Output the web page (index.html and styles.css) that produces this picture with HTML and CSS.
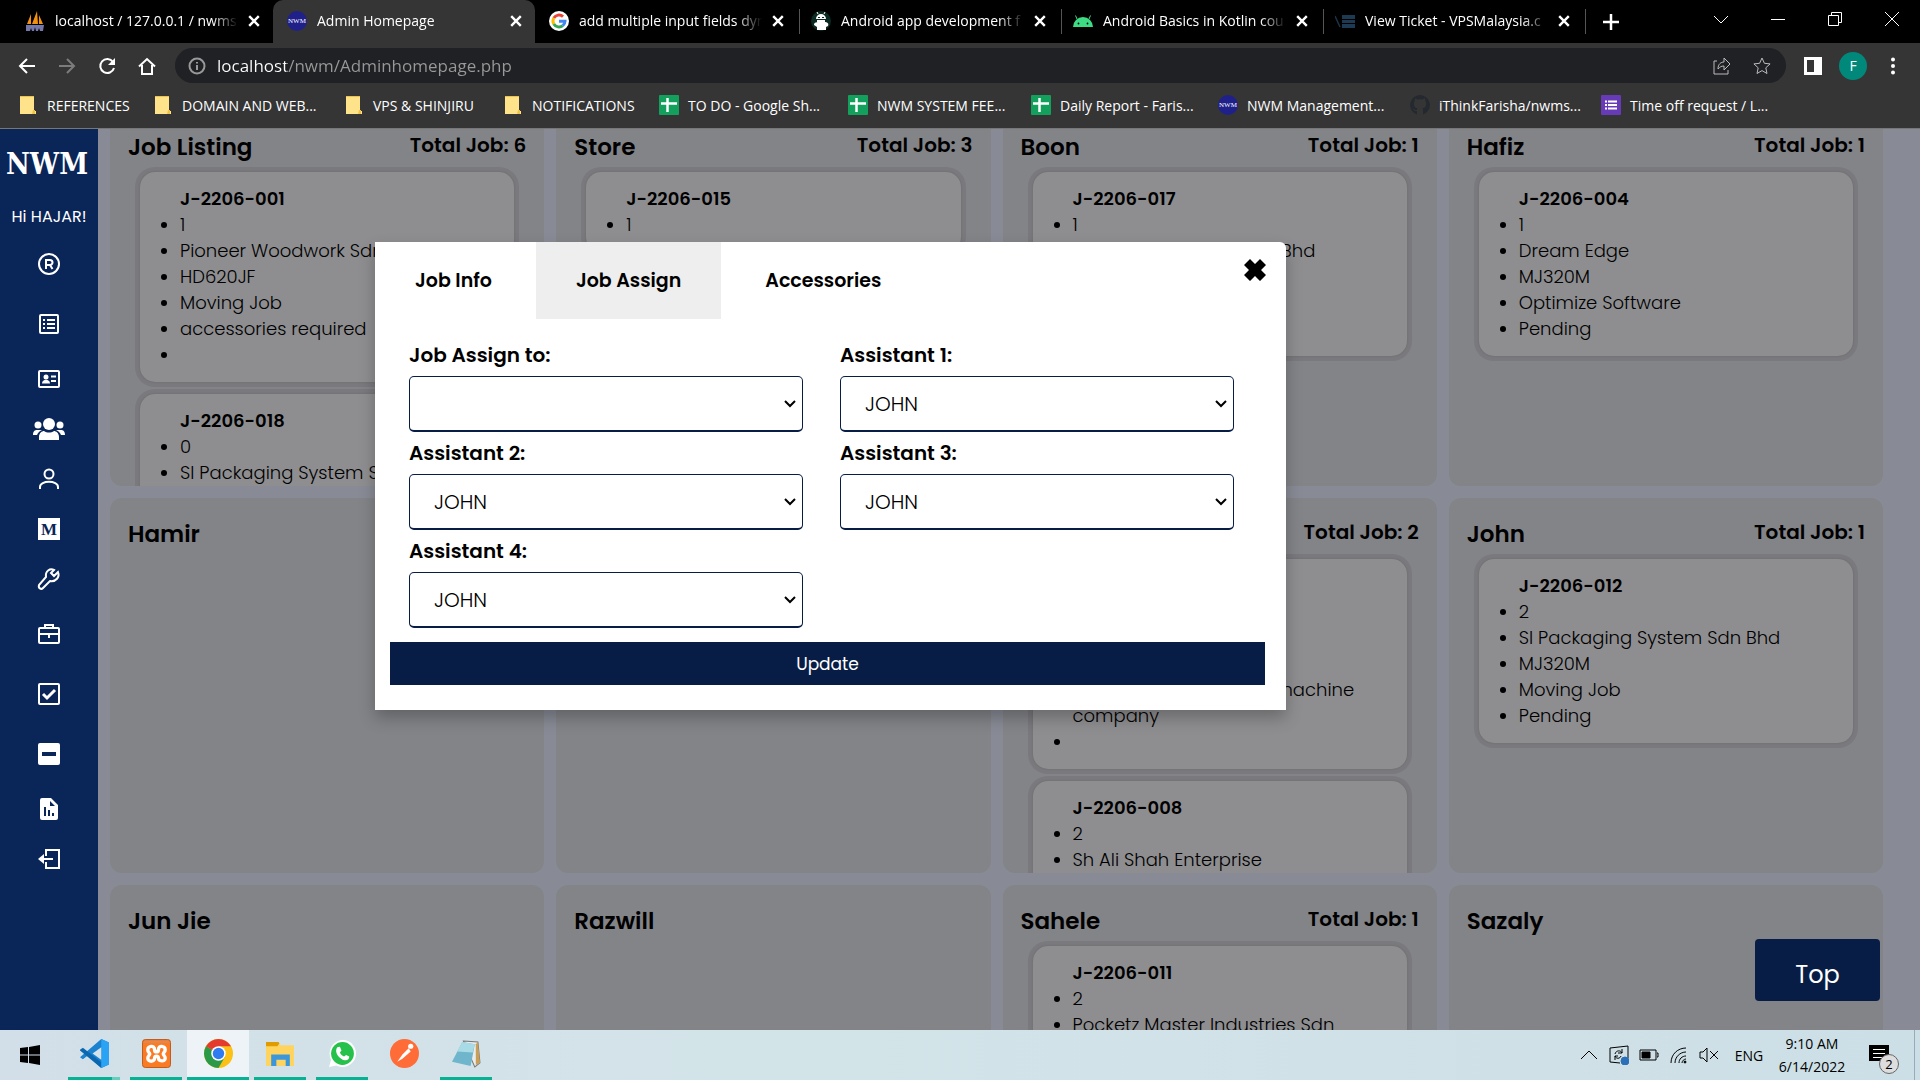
FILE: index.html
```html
<!DOCTYPE html>
<html lang="en">
<head>
<meta charset="utf-8">
<title>Admin Homepage</title>
<link rel="stylesheet" href="styles.css">
</head>
<body>
<header class="browser">
  <div class="tabstrip">
    <div class="tab">
      <svg class="fav" viewBox="0 0 20 20"><path d="M2 13 6 3v10zM7 13 12 0l1 13zM14 13l0-9 4 9z" fill="#f29111"/><path d="M1 14h18l-1 6h-3l-1-3-1 3h-2l-1-4-1 4H7l-1-3-1 3H1z" fill="#7477a8"/></svg>
      <span class="tab-title">localhost / 127.0.0.1 / nwms</span>
      <button class="tab-close" aria-label="Close tab"><svg viewBox="0 0 10 10"><path d="M1 1l8 8M9 1 1 9"/></svg></button>
    </div>
    <div class="tab active">
      <svg class="fav" viewBox="0 0 20 20"><circle cx="10" cy="10" r="10" fill="#20208a"/><text x="10" y="12" text-anchor="middle" class="nwm-mark">NWM</text></svg>
      <span class="tab-title">Admin Homepage</span>
      <button class="tab-close" aria-label="Close tab"><svg viewBox="0 0 10 10"><path d="M1 1l8 8M9 1 1 9"/></svg></button>
    </div>
    <div class="tab no-line">
      <svg class="fav" viewBox="0 0 20 20"><circle cx="10" cy="10" r="10" fill="#fff"/><g fill="none" stroke-width="3"><path d="M14 5.6A6 6 0 0 0 4.8 7" stroke="#ea4335"/><path d="M4.8 7a6 6 0 0 0 0 6" stroke="#fbbc05"/><path d="M4.8 13a6 6 0 0 0 9 1.6" stroke="#34a853"/><path d="M13.8 14.6A6 6 0 0 0 16 10.2h-6" stroke="#4285f4"/></g></svg>
      <span class="tab-title">add multiple input fields dyn</span>
      <button class="tab-close" aria-label="Close tab"><svg viewBox="0 0 10 10"><path d="M1 1l8 8M9 1 1 9"/></svg></button>
    </div>
    <div class="tab">
      <svg class="fav" viewBox="0 0 20 20"><circle cx="10" cy="10" r="10" fill="#0b2a22"/><path d="M5 8a5 5 0 0 1 10 0zM3 14c0-3 3-3 6-3h4c4 0 5 2 4 4l-2 1v3H6v-3z" fill="#fff"/><path d="M7 3 6 1M13 3l1-2" stroke="#fff"/><path d="M6 9h8v2H6z" fill="#fff"/><path d="M7 6h2v1H7zM11 6h2v1h-2z" fill="#0b2a22"/></svg>
      <span class="tab-title">Android app development f</span>
      <button class="tab-close" aria-label="Close tab"><svg viewBox="0 0 10 10"><path d="M1 1l8 8M9 1 1 9"/></svg></button>
    </div>
    <div class="tab">
      <svg class="fav" viewBox="0 0 20 20"><path d="M0 16a10 10 0 0 1 20 0z" fill="#3ddc84"/><path d="M4 8 2.500 4.500M16 8l1.500-3.500" stroke="#3ddc84"/><circle cx="5.500" cy="12.500" r=".9"/><circle cx="14.500" cy="12.500" r=".9"/></svg>
      <span class="tab-title">Android Basics in Kotlin cou</span>
      <button class="tab-close" aria-label="Close tab"><svg viewBox="0 0 10 10"><path d="M1 1l8 8M9 1 1 9"/></svg></button>
    </div>
    <div class="tab">
      <svg class="fav" viewBox="0 0 20 20"><path d="M0 5l5 11" stroke="#1d3344" stroke-width="1.500"/><path d="M7 4h13v4H7zM7 9h13v3H7zM7 13h13v4H7z" fill="#1d3a52"/></svg>
      <span class="tab-title">View Ticket - VPSMalaysia.c</span>
      <button class="tab-close" aria-label="Close tab"><svg viewBox="0 0 10 10"><path d="M1 1l8 8M9 1 1 9"/></svg></button>
    </div>
    <button class="new-tab" aria-label="New tab"><svg viewBox="0 0 16 16"><path d="M8 0v16M0 8h16" stroke="#fff" stroke-width="2.500"/></svg></button>
    <div class="window-controls">
      <button aria-label="Search tabs"><svg viewBox="0 0 14 14"><path d="M0 4l7 7 7-7"/></svg></button>
      <button aria-label="Minimize"><svg viewBox="0 0 14 14"><path d="M0 7.500h14"/></svg></button>
      <button aria-label="Restore"><svg viewBox="0 0 14 14"><path d="M.5 3.500h10v10H.5zM3.500 3V.5h10v10H11"/></svg></button>
      <button aria-label="Close window"><svg viewBox="0 0 14 14"><path d="M0 0l14 14M14 0 0 14"/></svg></button>
    </div>
  </div>

  <div class="toolbar">
    <button class="nav" aria-label="Back"><svg viewBox="0 0 18 18"><path d="M17 9H2M9 2 2 9l7 7"/></svg></button>
    <button class="nav off" aria-label="Forward"><svg viewBox="0 0 18 18"><path d="M1 9h15M9 2l7 7-7 7"/></svg></button>
    <button class="nav" aria-label="Reload"><svg viewBox="0 0 18 18"><path d="M15 5a7 7 0 1 0 1 6"/><path d="M17 1v7h-7z" class="solid"/></svg></button>
    <button class="nav" aria-label="Home"><svg viewBox="0 0 18 18"><path d="M1 9.500 9 2l8 7.500M4 8v9h10V8"/></svg></button>
    <div class="omnibox">
      <svg class="info" viewBox="0 0 18 18"><circle cx="9" cy="9" r="7.500"/><path d="M9 8v5M9 5v1.500"/></svg>
      <input class="url" type="text" value="localhost/nwm/Adminhomepage.php" aria-label="Address">
      <button aria-label="Share"><svg viewBox="0 0 20 20"><path d="M5 5H2v13h14v-4M6 13c0-5 3-7 6-7V2l6 6-6 6v-4c-3 0-4 1-6 3z"/></svg></button>
      <button aria-label="Bookmark"><svg viewBox="0 0 20 20"><path d="M10 2l2.400 5.300 5.700.6-4.300 3.900 1.200 5.700-5-2.900-5 2.900 1.200-5.700L1.900 7.900l5.700-.6z"/></svg></button>
    </div>
    <button class="tool" aria-label="Side panel"><svg viewBox="0 0 18 18"><path d="M0 0h18v18H0zM3 3v12h7V3z" fill="#fff" fill-rule="evenodd"/></svg></button>
    <button class="tool avatar">F</button>
    <button class="tool" aria-label="Menu"><svg viewBox="0 0 18 18" fill="#fff"><circle cx="9" cy="2.500" r="2"/><circle cx="9" cy="9" r="2"/><circle cx="9" cy="15.500" r="2"/></svg></button>
  </div>

  <nav class="bookmarks">
    <a href="#"><svg viewBox="0 0 20 20"><path d="M0 1h14v15h2v3H0z" fill="#ffe38b"/><path d="M0 1h14v1H0zM13 15h2v4h-3z" fill="#f0c24a"/></svg>REFERENCES</a>
    <a href="#"><svg viewBox="0 0 20 20"><path d="M0 1h14v15h2v3H0z" fill="#ffe38b"/><path d="M0 1h14v1H0zM13 15h2v4h-3z" fill="#f0c24a"/></svg>DOMAIN AND WEB...</a>
    <a href="#"><svg viewBox="0 0 20 20"><path d="M0 1h14v15h2v3H0z" fill="#ffe38b"/><path d="M0 1h14v1H0zM13 15h2v4h-3z" fill="#f0c24a"/></svg>VPS &amp; SHINJIRU</a>
    <a href="#"><svg viewBox="0 0 20 20"><path d="M0 1h14v15h2v3H0z" fill="#ffe38b"/><path d="M0 1h14v1H0zM13 15h2v4h-3z" fill="#f0c24a"/></svg>NOTIFICATIONS</a>
    <a href="#" class="site"><svg viewBox="0 0 20 20"><rect width="20" height="20" rx="1" fill="#12a05c"/><path d="M8.500 3v14M2 8.500h16" stroke="#fff" stroke-width="2.500"/></svg>TO DO - Google Sh...</a>
    <a href="#" class="site"><svg viewBox="0 0 20 20"><rect width="20" height="20" rx="1" fill="#12a05c"/><path d="M8.500 3v14M2 8.500h16" stroke="#fff" stroke-width="2.500"/></svg>NWM SYSTEM FEE...</a>
    <a href="#" class="site"><svg viewBox="0 0 20 20"><rect width="20" height="20" rx="1" fill="#12a05c"/><path d="M8.500 3v14M2 8.500h16" stroke="#fff" stroke-width="2.500"/></svg>Daily Report - Faris...</a>
    <a href="#" class="site"><svg viewBox="0 0 20 20"><circle cx="10" cy="10" r="10" fill="#20208a"/><text x="10" y="12" text-anchor="middle" class="nwm-mark">NWM</text></svg>NWM Management...</a>
    <a href="#" class="site"><svg viewBox="0 0 20 20"><path d="M10 0a10 10 0 0 0-3 19.500V16c-3 .6-3.500-1.500-4.500-2 2-.4 2 1.500 4.500 1 0-1 .3-1.400.8-1.700C5 13 3.800 11.500 3.800 8.700c0-1 .4-2 1-2.600-.2-.8-.1-1.800.2-2.500 1 0 1.900.5 2.500 1a9 9 0 0 1 5 0c.6-.5 1.500-1 2.500-1 .3.700.4 1.700.2 2.500.6.600 1 1.600 1 2.600 0 2.800-1.200 4.300-4 4.600.5.300.8 1 .8 2v4.200A10 10 0 0 0 10 0z" fill="#24292f"/></svg>iThinkFarisha/nwms...</a>
    <a href="#" class="site"><svg viewBox="0 0 20 20"><rect width="20" height="20" rx="1" fill="#673ab7"/><path d="M4 6.500h2M7 6.500h9M4 10h2M7 10h9M4 13.500h2M7 13.500h9" stroke="#fff" stroke-width="2"/></svg>Time off request / L...</a>
  </nav>
</header>

<div class="app">
  <aside class="sidebar">
    <div class="logo">NWM</div>
    <div class="greeting">Hi HAJAR!</div>
    <nav class="menu">
      <a href="#" class="tall" aria-label="Register"><svg viewBox="0 0 24 24"><circle cx="12" cy="12" r="10" class="line"/><path d="M9 17V8h4a2.500 2.500 0 0 1 0 5H9m4 0 2.500 4" class="line"/></svg></a>
      <a href="#" class="tall" aria-label="Job list"><svg viewBox="0 0 24 24"><rect x="3" y="3" width="18" height="18" rx="1" class="line"/><path d="M6 8h2M10 8h8M6 12h2M10 12h8M6 16h2M10 16h8" class="line"/></svg></a>
      <a href="#" aria-label="Contacts"><svg viewBox="0 0 24 24"><rect x="2" y="4" width="20" height="16" rx="1" class="line"/><circle cx="9" cy="10" r="2.500"/><path d="M5 16.500c0-5 8-5 8 0zM14 8.500h5v2h-5zM14 13h5v2h-5z"/></svg></a>
      <a href="#" class="wide" aria-label="Staff"><svg viewBox="0 0 32 24"><path d="M6 23v-3c0-4 3-6 5-6 3 2 7 2 10 0 2 0 5 2 5 6v3zM0 18c0-4 2-5 4-5h5c-3 1-4 3-5 5zM32 18c0-4-2-5-4-5h-5c3 1 4 3 5 5z"/><circle cx="16" cy="7" r="6"/><circle cx="5" cy="8" r="3.500"/><circle cx="27" cy="8" r="3.500"/></svg></a>
      <a href="#" aria-label="Profile"><svg viewBox="0 0 24 24"><circle cx="12" cy="7" r="4.500" class="line"/><path d="M3 22v-2c0-7 18-7 18 0v2" class="line"/></svg></a>
      <a href="#" aria-label="Machines"><svg viewBox="0 0 24 24"><path d="M1 1h22v22H1z"/><text x="12" y="18" text-anchor="middle" class="m-mark">M</text></svg></a>
      <a href="#" aria-label="Maintenance"><svg viewBox="0 0 24 24"><path d="M17 3c-4-2-9 1-8 7l-7 8c-1 3 2 5 4 3l7-7c6 1 10-4 8-9l-4 4-3-3z" class="line"/></svg></a>
      <a href="#" class="tall" aria-label="Work"><svg viewBox="0 0 24 24"><rect x="2" y="6" width="20" height="15" rx="1" class="line"/><path d="M8 6V3h8v3M2 12h20M12 11v5" class="line"/></svg></a>
      <a href="#" class="tall" aria-label="Completed"><svg viewBox="0 0 24 24"><rect x="2" y="2" width="20" height="20" rx="1" class="line"/><path d="M6 12l4 4 8-8" class="line bold"/></svg></a>
      <a href="#" class="tall" aria-label="Incomplete"><svg viewBox="0 0 24 24"><path d="M3 1h18q2 0 2 2v18q0 2-2 2H3q-2 0-2-2V3q0-2 2-2zM5 10v4h14v-4z" fill-rule="evenodd"/></svg></a>
      <a href="#" aria-label="Report"><svg viewBox="0 0 24 24"><path d="M5 1h9l7 7v13q0 2-2 2H5q-2 0-2-2V3q0-2 2-2zM7 10v9h2v-9zM11 13v6h2v-6zM15 16v3h2v-3zM13 4v5h5z" fill-rule="evenodd"/></svg></a>
      <a href="#" aria-label="Log out"><svg viewBox="0 0 24 24"><path d="M9 9V3h13v18H9v-6M6 12h10" class="line"/><path d="M1 12l6-5v10z"/></svg></a>
    </nav>
  </aside>

  <main class="content">
    <div class="board">
      <section class="column">
        <div class="head"><h2>Job Listing</h2><span>Total Job: 6</span></div>
        <div class="card"><ul><li class="code">J-2206-001</li><li>1</li><li>Pioneer Woodwork Sdn Bhd</li><li>HD620JF</li><li>Moving Job</li><li>accessories required</li><li></li></ul></div>
        <div class="card"><ul><li class="code">J-2206-018</li><li>0</li><li>Sl Packaging System Sdn Bhd</li></ul></div>
      </section>
      <section class="column">
        <div class="head"><h2>Store</h2><span>Total Job: 3</span></div>
        <div class="card"><ul><li class="code">J-2206-015</li><li>1</li></ul></div>
      </section>
      <section class="column">
        <div class="head"><h2>Boon</h2><span>Total Job: 1</span></div>
        <div class="card"><ul><li class="code">J-2206-017</li><li>1</li><li>Pioneer Woodwork Sdn Bhd</li><li></li><li></li><li></li></ul></div>
      </section>
      <section class="column">
        <div class="head"><h2>Hafiz</h2><span>Total Job: 1</span></div>
        <div class="card"><ul><li class="code">J-2206-004</li><li>1</li><li>Dream Edge</li><li>MJ320M</li><li>Optimize Software</li><li>Pending</li></ul></div>
      </section>

      <section class="column">
        <div class="head"><h2>Hamir</h2></div>
      </section>
      <section class="column"></section>
      <section class="column">
        <div class="head"><h2></h2><span>Total Job: 2</span></div>
        <div class="card"><ul><li class="code"></li><li></li><li></li><li></li><li>Moving the jobs to the machine company</li><li></li></ul></div>
        <div class="card"><ul><li class="code">J-2206-008</li><li>2</li><li>Sh Ali Shah Enterprise</li><li></li></ul></div>
      </section>
      <section class="column">
        <div class="head"><h2>John</h2><span>Total Job: 1</span></div>
        <div class="card"><ul><li class="code">J-2206-012</li><li>2</li><li>Sl Packaging System Sdn Bhd</li><li>MJ320M</li><li>Moving Job</li><li>Pending</li></ul></div>
      </section>

      <section class="column">
        <div class="head"><h2>Jun Jie</h2></div>
      </section>
      <section class="column">
        <div class="head"><h2>Razwill</h2></div>
      </section>
      <section class="column">
        <div class="head"><h2>Sahele</h2><span>Total Job: 1</span></div>
        <div class="card"><ul><li class="code">J-2206-011</li><li>2</li><li>Pocketz Master Industries Sdn Bhd</li></ul></div>
      </section>
      <section class="column">
        <div class="head"><h2>Sazaly</h2></div>
      </section>
    </div>
  </main>

  <button class="to-top">Top</button>

  <div class="overlay">
    <div class="modal" role="dialog" aria-label="Job Assign">
      <div class="modal-tabs">
        <button>Job Info</button>
        <button class="current">Job Assign</button>
        <button>Accessories</button>
      </div>
      <button class="modal-close" aria-label="Close"><svg viewBox="0 0 22 22"><path d="M6 0l5 5 5-5 6 6-5 5 5 5-6 6-5-5-5 5-6-6 5-5-5-5z"/></svg></button>
      <form>
        <div class="fields">
          <div class="field"><label for="assign">Job Assign to:</label><select id="assign"><option></option><option>JOHN</option></select></div>
          <div class="field"><label for="a1">Assistant 1:</label><select id="a1"><option>JOHN</option></select></div>
          <div class="field"><label for="a2">Assistant 2:</label><select id="a2"><option>JOHN</option></select></div>
          <div class="field"><label for="a3">Assistant 3:</label><select id="a3"><option>JOHN</option></select></div>
          <div class="field"><label for="a4">Assistant 4:</label><select id="a4"><option>JOHN</option></select></div>
        </div>
        <button class="update" type="button">Update</button>
      </form>
    </div>
  </div>
</div>

<footer class="taskbar">
  <button class="start" aria-label="Start"><svg viewBox="0 0 20 20"><path d="M0 3l8-1v7.500H0zM9 2l11-2v9.500H9zM0 10.500h8V18l-8-1zM9 10.500h11V20L9 18z"/></svg></button>
  <div class="apps">
    <button class="open more" aria-label="Visual Studio Code"><svg viewBox="0 0 30 30"><path d="M22 0l8 3.500v23L22 30 8 17l-5 4-3-2 22-19z" fill="#1a82cf"/><path d="M0 11l3-2 19 15v6L0 12z" fill="#0a67b0"/><path d="M22 0l8 3.500v23L22 30z" fill="#2aa3f4"/><path d="M22 8.500v13L13 15z" fill="#d5e2e9"/></svg></button>
    <button class="open" aria-label="XAMPP"><svg viewBox="0 0 30 30"><rect x=".5" y=".5" width="29" height="29" rx="3" fill="#fb7a24" stroke="#b85b1b"/><path d="M2 2h26v2H2z" fill="#d98a5c"/><path d="M13 11c0-5-7-4-7 0 0 3 2 3 2 4.500S6 17 6 20c0 4 7 4 7 0 0-3 4-3 4 0s7 4 7 0c0-3-2-3-2-4.500s2-2 2-4.500c0-4-7-5-7 0 0 3-4 3-4 0z" fill="none" stroke="#fff" stroke-width="3.500"/></svg></button>
    <button class="open focus" aria-label="Chrome"><svg viewBox="0 0 28 28"><circle cx="14" cy="14" r="14" fill="#fbc116"/><path d="M14 14 1.900 7A14 14 0 0 0 14 28l6-10.500z" fill="#2a9a48"/><path d="M14 14 1.900 7a14 14 0 0 1 24.200 0H14z" fill="#e33b2e"/><path d="M7.500 14 1.900 7v8z" fill="#2a9a48"/><circle cx="14" cy="14" r="7" fill="#fff"/><circle cx="14" cy="14" r="5.500" fill="#2f7cf0"/></svg></button>
    <button class="open" aria-label="File Explorer"><svg viewBox="0 0 28 28"><path d="M0 3h12l2 3h13v20H0z" fill="#ffd45e"/><path d="M0 3h12l1 1-2 3H0z" fill="#e09b00"/><path d="M5 15h18v11h-4v-6h-9v6H5z" fill="#3b96dc"/></svg></button>
    <button class="open" aria-label="WhatsApp"><svg viewBox="0 0 28 28"><path d="M14 1a13 13 0 1 1-6 24.500L1 27l2-7A13 13 0 0 1 14 1z" fill="#fff"/><circle cx="14" cy="14" r="11" fill="#25c14a"/><path d="M9 8l2.500-.5L13 11l-1.500 2c1 2 2 3 4 4l2-1.500 3 1.500c0 5-6 4-9 1-3-2-5-7-2.500-10z" fill="#fff"/></svg></button>
    <button aria-label="Postman"><svg viewBox="0 0 28 28"><circle cx="14" cy="14" r="14" fill="#ff6c37"/><circle cx="20" cy="7" r="2.500" fill="#fff"/><path d="M18 9l2 3-8 7-5 3 5-7z" fill="#fff"/></svg></button>
    <button class="open" aria-label="Notepad"><svg viewBox="0 0 28 28"><path d="M11 2l14 1 2 20-5 4z" fill="#e9ecea" stroke="#777"/><path d="M23 5l2-2 2 20-4 2z" fill="#c99f58"/><path d="M10 3l12 2-4 21L0 22z" fill="#6fb6cc"/><path d="M10 3l12 2-2 8L5 12z" fill="#a9dbe6"/></svg></button>
  </div>
  <div class="tray">
    <svg class="t-ico" viewBox="0 0 20 20"><path d="M2 14l8-8 8 8"/></svg>
    <svg class="t-ico" viewBox="0 0 20 20"><path d="M11 18 1 17V3l18-2v12M6 9c1-4 6-4 7-1M13 4v4H9M12 11c-1 3-5 3-6 0M6 15v-4h3"/><circle cx="16" cy="16" r="4" fill="#2a70b8" stroke="#2a70b8"/></svg>
    <svg class="t-ico" viewBox="0 0 20 20"><path d="M1 5h16v10H1zM18 8h1v4h-1"/><path d="M3 7h8v6H3z" fill="#000"/></svg>
    <svg class="t-ico" viewBox="0 0 20 20"><path d="M2 18C2 9 9 3 17 3M6 18c0-6 5-11 11-11M10 18c0-4 3-7 7-7M13 18c0-2 2-4 4-4"/><circle cx="16" cy="17" r="1" fill="#000"/></svg>
    <svg class="t-ico" viewBox="0 0 20 20"><path d="M1 7h3l4-4v14l-4-4H1zM11 6l8 8M19 6l-8 8"/></svg>
    <span class="lang">ENG</span>
    <div class="clock"><span>9:10 AM</span><span>6/14/2022</span></div>
    <div class="notice"><svg viewBox="0 0 20 20"><path d="M0 0h20v16h-5v4l-4-4H0z"/><path d="M4 4.500h12M4 8.500h12M4 12.500h12" stroke="#fff"/></svg><span>2</span></div>
  </div>
</footer>
</body>
</html>
```
FILE: styles.css
```css
* { box-sizing: border-box; }

body {
  margin: 0;
  height: 100vh;
  display: flex;
  flex-direction: column;
  overflow: hidden;
  font-family: Poppins, Inter, sans-serif;
  color: #000;
}

button {
  margin: 0;
  padding: 0;
  border: 0;
  background: none;
  color: inherit;
  font: inherit;
}

a { color: inherit; text-decoration: none; }
svg { display: block; flex: none; }

/* Browser frame */
.browser {
  flex: none;
  background: #353535;
  border-bottom: 1px solid #777;
  color: #fff;
  font-family: "Segoe UI", "Open Sans", sans-serif;
  font-size: 14px;
}

.tabstrip {
  display: flex;
  height: 43px;
  padding-left: 11px;
  background: #000;
}

.tab {
  display: flex;
  align-items: center;
  width: 262px;
  padding: 0 13px 2px 14px;
  gap: 10px;
  position: relative;
}

.tab + .tab:not(.active):not(.no-line)::before,
.new-tab::before {
  content: "";
  position: absolute;
  left: 2px;
  top: 9px;
  width: 1px;
  height: 25px;
  background: #555;
}

.tab.active { background: #353535; border-radius: 10px 10px 0 0; }
.fav { width: 20px; height: 20px; }
.nwm-mark { font: 7px "Liberation Serif", serif; fill: #fff; }

.tab-title {
  flex: 1;
  min-width: 0;
  overflow: hidden;
  white-space: nowrap;
  mask-image: linear-gradient(90deg, #000 86%, transparent);
}

.tab-close svg { width: 12px; height: 12px; stroke: #fff; stroke-width: 2; }
.new-tab { position: relative; width: 56px; display: grid; place-items: center; }
.new-tab svg { width: 16px; height: 16px; }
.window-controls { margin-left: auto; display: flex; padding-bottom: 6px; }
.window-controls button { width: 57px; display: grid; place-items: center; }
.window-controls svg { width: 14px; height: 14px; fill: none; stroke: #fff; }

.toolbar {
  display: flex;
  align-items: center;
  height: 45px;
  padding: 0 7px;
}

.nav { width: 40px; display: grid; place-items: center; }
.nav svg { width: 18px; height: 18px; fill: none; stroke: #fff; stroke-width: 2; }
.nav.off svg { stroke: #7c7c7c; }
.nav .solid { fill: #fff; stroke: none; }

.omnibox {
  flex: 1;
  display: flex;
  align-items: center;
  height: 35px;
  margin: 0 7px 0 8px;
  padding: 0 4px 0 13px;
  border-radius: 18px;
  background: #202124;
}

.omnibox svg { width: 20px; height: 20px; fill: none; stroke: #bbb; stroke-width: 2; }
.omnibox .info { width: 18px; height: 18px; stroke: #999; }
.omnibox button { width: 40px; display: grid; place-items: center; }
.omnibox button svg { stroke-width: 1; }

.url {
  flex: 1;
  margin-left: 11px;
  padding: 0;
  border: 0;
  outline: 0;
  font: 17px/30px "Segoe UI", "Open Sans", sans-serif;
  color: transparent;
  background: linear-gradient(90deg, #fff 69px, #999 69px) text;
}

.tool { width: 40px; display: grid; place-items: center; }
.tool svg { width: 18px; height: 18px; }

.avatar {
  width: 28px;
  height: 28px;
  margin: 0 6px;
  border-radius: 50%;
  background: #00897b;
}

.bookmarks {
  display: grid;
  grid-template-columns: 135px 191px 159px 154px 189px 183px 187px 192px 191px 1fr;
  height: 40px;
  padding: 0 0 6px 20px;
}

.bookmarks a { display: flex; align-items: center; gap: 7px; white-space: nowrap; }
.bookmarks .site { gap: 9px; }
.bookmarks svg { width: 20px; height: 20px; }

/* Application */
.app {
  flex: 1;
  min-height: 0;
  display: flex;
  position: relative;
  overflow: hidden;
  background: #888b95;
}

.sidebar {
  flex: none;
  width: 98px;
  background: #0a2558;
  color: #fff;
  text-align: center;
}

.logo {
  height: 74px;
  padding: 15px 4px 0 0;
  font: bold 29px/40px "DejaVu Serif Condensed", "DejaVu Serif", serif;
}

.greeting { font-size: 16px; line-height: 28px; margin-bottom: 3px; }
.menu { display: flex; flex-direction: column; }
.menu a { display: grid; place-items: center; height: 50px; }
.menu .tall { height: 60px; }
.menu svg { width: 24px; height: 24px; fill: #fff; }
.menu .wide svg { width: 32px; }
.menu .line { fill: none; stroke: #fff; stroke-width: 2; }
.menu .bold { stroke-width: 3; }
.m-mark { font: bold 17px "Liberation Serif", serif; fill: #0a2558; }

.content { flex: 1; min-width: 0; padding: 0 37px 0 12px; }

/* The board is scrolled a little past its top edge */
.board {
  display: grid;
  grid-template-columns: repeat(4, 1fr);
  grid-auto-rows: 375px;
  gap: 12px;
  margin-top: -18px;
}

.column {
  overflow: hidden;
  padding: 20px 30px 0;
  border-radius: 12px;
  background: #838488;
}

.head {
  display: flex;
  justify-content: space-between;
  height: 41px;
  margin: 0 -12px;
}

.head h2 { margin: 0; font-size: 23px; line-height: 32px; font-weight: 600; }
.head span { font-size: 20px; line-height: 28px; font-weight: 600; }

.card {
  margin-bottom: 12px;
  padding: 14px 0;
  border-radius: 15px;
  background: #8e8e90;
  box-shadow: 0 0 2px #666, 0 0 0 5px #7a797d;
}

.card ul { margin: 0; padding: 0 40px; font-size: 18px; font-weight: 300; line-height: 26px; }
.card li { min-height: 26px; }
.card .code { list-style: none; font-weight: 600; }

.to-top {
  position: absolute;
  right: 40px;
  bottom: 29px;
  width: 125px;
  height: 62px;
  padding-top: 8px;
  border-radius: 4px;
  background: #081d45;
  color: #fff;
  font-size: 24px;
}

/* Job dialog */
.overlay {
  position: absolute;
  inset: 0;
  display: grid;
  grid-template-columns: 375fr 911fr 634fr;
  align-items: start;
  padding-top: 113px;
}

.modal {
  grid-column: 2;
  position: relative;
  padding-bottom: 25px;
  border-radius: 0 6px 0 0;
  background: #fff;
  box-shadow: 0 8px 16px rgba(0, 0, 0, .25);
}

.modal-tabs { display: flex; gap: 4px; }

.modal-tabs button {
  height: 77px;
  padding: 0 40px;
  font-size: 19px;
  font-weight: 600;
}

.modal-tabs .current { background: #eee; }

.modal-close { position: absolute; right: 20px; top: 17px; }
.modal-close svg { width: 22px; height: 22px; }

.fields {
  display: grid;
  grid-template-columns: 1fr 1fr;
  gap: 6px 37px;
  padding: 21px 52px 0 34px;
}

.field { display: flex; flex-direction: column; gap: 6px; }
.field label { font-size: 20px; line-height: 30px; font-weight: 600; }

.field select {
  appearance: none;
  height: 56px;
  padding: 0 24px;
  border: 1px solid #081d45;
  border-bottom-width: 2px;
  border-radius: 5px;
  background: #fff url("data:image/svg+xml,%3Csvg xmlns='http://www.w3.org/2000/svg' width='12' height='8' viewBox='0 0 12 8'%3E%3Cpath d='M1 1l5 5 5-5' fill='none' stroke='%23000' stroke-width='2'/%3E%3C/svg%3E") no-repeat right 6px center;
  color: #000;
  font: 300 20px Poppins, Inter, sans-serif;
}

.update {
  display: block;
  width: calc(100% - 36px);
  height: 43px;
  margin: 14px 21px 0 15px;
  background: #081d45;
  color: #fff;
  font-size: 17px;
}

/* Taskbar */
.taskbar {
  flex: none;
  display: flex;
  height: 50px;
  background: linear-gradient(90deg, #d2dfe8, #d3e4e9 40%, #cddfe6);
  font-family: "Segoe UI", "Open Sans", sans-serif;
}

.start { width: 60px; margin-right: 3px; display: grid; place-items: center; }
.start svg { width: 20px; height: 20px; }
.apps { display: flex; }

.apps button {
  width: 52px;
  margin: 0 5px;
  display: grid;
  place-items: center;
  border-bottom: 3px solid transparent;
}

.apps .open { border-color: #06b294; }
.apps .more { border-image: linear-gradient(90deg, #06b294 80%, #63d0bd 80%) 3; border-width: 0 0 3px; }
.apps .focus { width: 62px; margin: 0; background: #eef3f8; }
.apps svg { width: 29px; height: 29px; }

.tray { display: flex; align-items: center; margin-left: auto; padding-right: 5px; }
.t-ico { width: 20px; height: 20px; margin: 0 5px; fill: none; stroke: #000; stroke-width: 1; }
.lang { width: 50px; text-align: center; font-size: 14px; }
.clock { width: 76px; display: flex; flex-direction: column; text-align: center; font-size: 14px; line-height: 23px; }
.notice { position: relative; width: 65px; height: 50px; padding: 15px 0 0 19px; border-right: 1px solid #9ab; }
.notice svg { width: 20px; height: 20px; }

.notice span {
  position: absolute;
  left: 29px;
  top: 24px;
  width: 20px;
  height: 20px;
  border: 1px solid #666;
  border-radius: 50%;
  background: #ddd;
  text-align: center;
  font-size: 13px;
  line-height: 18px;
}
```
